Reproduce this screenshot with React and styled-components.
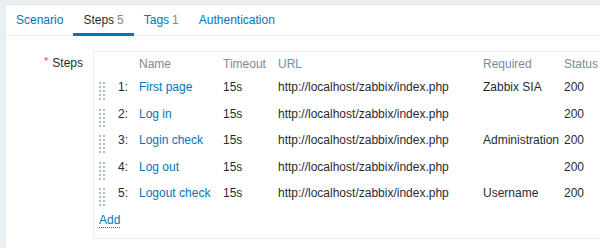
import React from 'react';
import styled, { createGlobalStyle } from 'styled-components';

const GlobalStyle = createGlobalStyle`
  html, body {
    margin: 0;
    padding: 0;
    background: #ebeef0;
    overflow: hidden;
  }
  body {
    font-family: "Liberation Sans", Arial, sans-serif;
    font-size: 12px;
    color: #1f2c33;
  }
`;

const Panel = styled.div`
  margin: 4px 0 0 6px;
  height: 244px;
  background: #fff;
  border-top: 1px solid #dde3e6;
  overflow: hidden;
`;

const TabList = styled.div`
  display: flex;
  height: 30px;
  border-bottom: 1px solid #ebeef0;
`;

const Tab = styled.div`
  position: relative;
  padding: 0 10px;
  line-height: 30px;
  color: ${p => (p.$active ? '#1f2c33' : '#0275b8')};
  white-space: nowrap;

  ${p => p.$active && `
    &::after {
      content: '';
      position: absolute;
      left: 0;
      right: 0;
      bottom: -1px;
      height: 3px;
      background: #0275b8;
    }
  `}
`;

const Count = styled.span`
  color: #768d99;
  margin-left: 3px;
`;

const Form = styled.div`
  padding-top: 15px;
`;

const FormRow = styled.div`
  display: grid;
  grid-template-columns: 77px auto;
  column-gap: 10px;
  align-items: start;
`;

const Label = styled.div`
  text-align: right;
  padding-top: 5px;
  line-height: 14px;
  white-space: nowrap;
`;

const Asterisk = styled.span`
  color: #e45959;
  font-size: 11px;
  margin-right: 4px;
  position: relative;
  top: -2px;
`;

const StepsBox = styled.div`
  border: 1px solid #ebeef0;
  border-right: none;
  width: 620px;
  padding-bottom: 11px;
`;

const StepsGrid = styled.div`
  display: grid;
  grid-template-columns: 17px 23px 84px 55px 205px 81px 60px;
  grid-template-rows: 22px repeat(5, 26.5px);
  line-height: 14px;
`;

const HeadCell = styled.div`
  color: #768d99;
  padding: 5px 5px 3px;
  white-space: nowrap;
`;

const Cell = styled.div`
  align-self: center;
  padding: 0 5px;
  white-space: nowrap;
  text-align: ${p => (p.$right ? 'right' : 'left')};
  color: ${p => (p.$link ? '#0275b8' : '#1f2c33')};
  ${p => p.$right && 'padding-right: 6px;'}
`;

const HandleCell = styled.div`
  align-self: end;
  padding: 0 0 0.5px 5px;
  line-height: 0;
`;

const AddRow = styled.div`
  padding: 6.5px 0 0 5px;
  line-height: 14px;
`;

const AddLink = styled.span`
  color: #0275b8;
  border-bottom: 1px dotted #0275b8;
`;

const DragHandle = () => (
  <svg width="6" height="18" viewBox="0 0 6 18">
    {[0, 4, 8, 12, 16].map(y => (
      <g key={y} fill="#acbbc2">
        <rect x="0" y={y} width="2" height="2" />
        <rect x="4" y={y} width="2" height="2" />
      </g>
    ))}
  </svg>
);

const steps = [
  { name: 'First page', required: 'Zabbix SIA' },
  { name: 'Log in', required: '' },
  { name: 'Login check', required: 'Administration' },
  { name: 'Log out', required: '' },
  { name: 'Logout check', required: 'Username' },
];

const headers = ['', '', 'Name', 'Timeout', 'URL', 'Required', 'Status'];

export default function App() {
  return (
    <>
      <GlobalStyle />
      <Panel>
        <TabList>
          <Tab>Scenario</Tab>
          <Tab $active>Steps<Count>5</Count></Tab>
          <Tab>Tags<Count>1</Count></Tab>
          <Tab>Authentication</Tab>
        </TabList>
        <Form>
          <FormRow>
            <Label><Asterisk>*</Asterisk>Steps</Label>
            <StepsBox>
              <StepsGrid>
                {headers.map((h, i) => (
                  <HeadCell key={i}>{h}</HeadCell>
                ))}
                {steps.map((s, i) => (
                  <React.Fragment key={s.name}>
                    <HandleCell><DragHandle /></HandleCell>
                    <Cell $right>{i + 1}:</Cell>
                    <Cell $link>{s.name}</Cell>
                    <Cell>15s</Cell>
                    <Cell>http://localhost/zabbix/index.php</Cell>
                    <Cell>{s.required}</Cell>
                    <Cell>200</Cell>
                  </React.Fragment>
                ))}
              </StepsGrid>
              <AddRow><AddLink>Add</AddLink></AddRow>
            </StepsBox>
          </FormRow>
        </Form>
      </Panel>
    </>
  );
}
